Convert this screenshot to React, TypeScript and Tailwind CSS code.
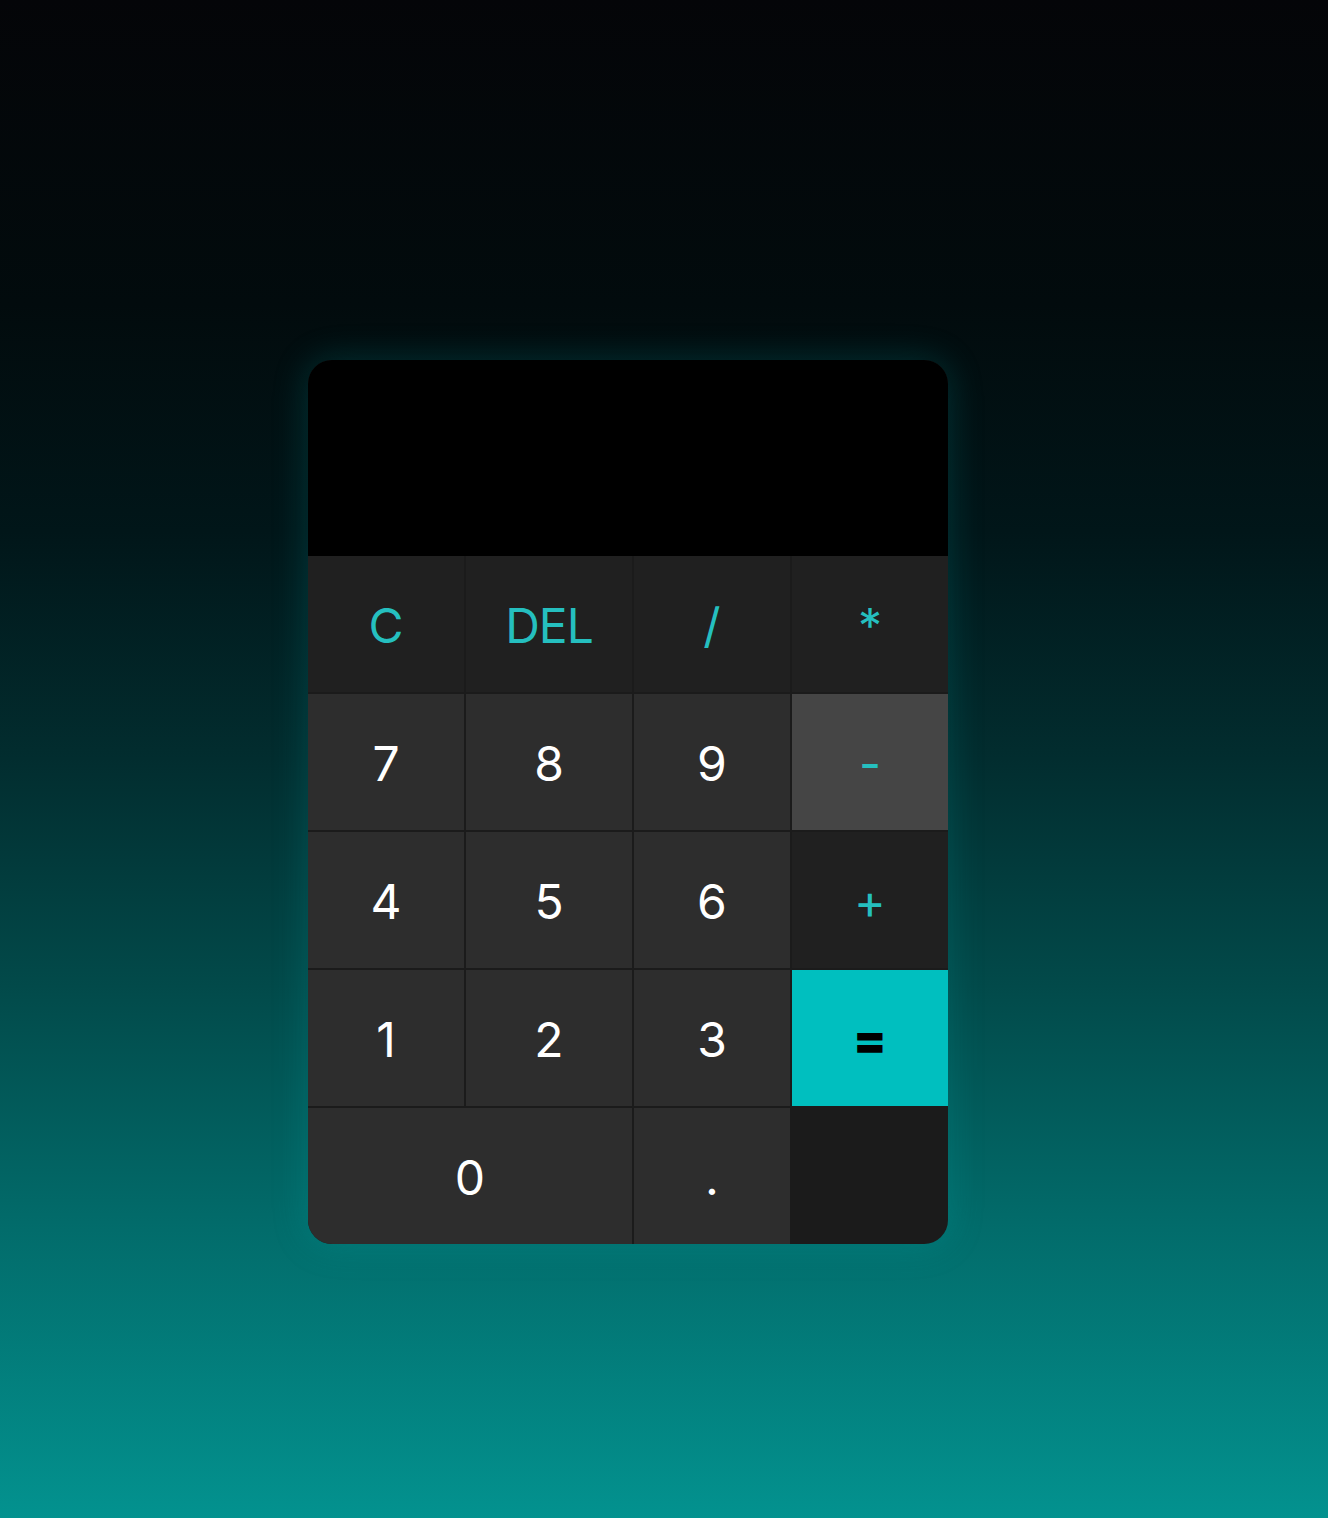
import React from 'react';

type Key = { label: string; cls: string };

const keys: Key[] = [
    { label: 'C', cls: 'bg-[#202020] text-[#25bfbf]' },
    { label: 'DEL', cls: 'bg-[#202020] text-[#25bfbf] tracking-[-1px]' },
    { label: '/', cls: 'bg-[#202020] text-[#25bfbf]' },
    { label: '*', cls: 'bg-[#202020] text-[#25bfbf] text-[44px]' },
    { label: '7', cls: 'bg-[#2d2d2d] text-white' },
    { label: '8', cls: 'bg-[#2d2d2d] text-white' },
    { label: '9', cls: 'bg-[#2d2d2d] text-white' },
    { label: '-', cls: 'bg-[#454545] text-[#25bfbf]' },
    { label: '4', cls: 'bg-[#2d2d2d] text-white' },
    { label: '5', cls: 'bg-[#2d2d2d] text-white' },
    { label: '6', cls: 'bg-[#2d2d2d] text-white' },
    { label: '+', cls: 'bg-[#202020] text-[#25bfbf]' },
    { label: '1', cls: 'bg-[#2d2d2d] text-white' },
    { label: '2', cls: 'bg-[#2d2d2d] text-white' },
    { label: '3', cls: 'bg-[#2d2d2d] text-white' },
    { label: '=', cls: 'bg-[#00bfbf] text-black font-black' },
    { label: '0', cls: 'bg-[#2d2d2d] text-white col-span-2' },
    { label: '.', cls: 'bg-[#2d2d2d] text-white' },
];

const App: React.FC = () => {
    return (
        <div className="min-h-[1518px] w-full bg-[linear-gradient(to_bottom,#040508_0%,#020b0d_20%,#011619_35%,#022d2f_50%,#024a4a_65%,#026a69_80%,#03928f_100%)] pt-[360px] pl-[308px] font-['Inter',sans-serif]">
            <div className="w-[640px] rounded-[24px] overflow-hidden bg-[#1b1b1b] shadow-[0_0_36px_rgba(0,180,180,0.22)]">
                {/* Display */}
                <div className="h-[196px] bg-black"></div>

                {/* Keypad */}
                <div className="grid grid-cols-[156px_166px_156px_156px] auto-rows-[136px] gap-[2px]">
                    {keys.map((k, i) => (
                        <button
                            key={i}
                            className={`flex items-center justify-center pt-[4px] text-[48px] leading-none ${k.cls}`}
                        >
                            {k.label}
                        </button>
                    ))}
                </div>
            </div>
        </div>
    );
};

export default App;
